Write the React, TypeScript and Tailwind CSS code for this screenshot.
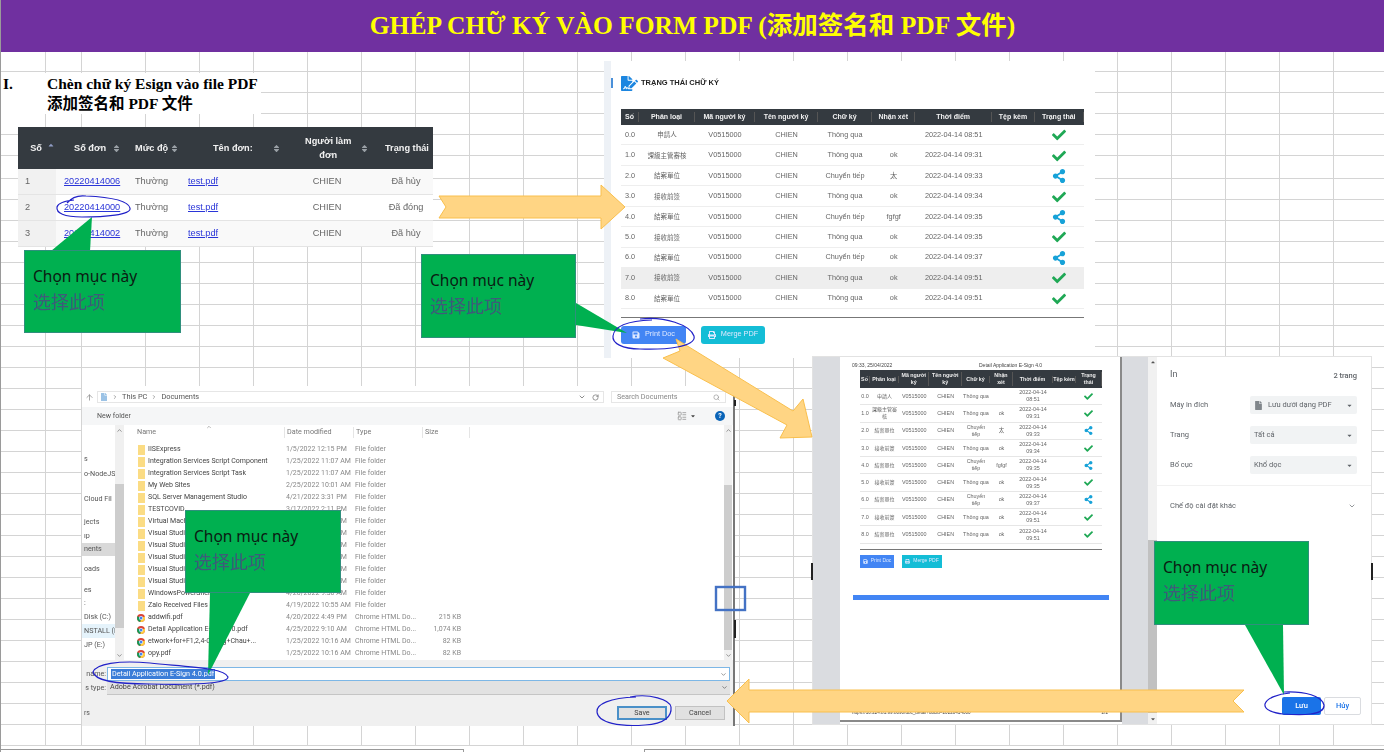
import React from 'react';
import { FaCheck, FaShareAlt, FaSave, FaPrint, FaFileSignature, FaFile, FaCaretDown, FaCaretUp, FaSort } from 'react-icons/fa';
import { ArrowUp, ChevronDown, ChevronRight, ChevronUp, RotateCw, Search, LayoutList } from 'lucide-react';

const sans = 'font-["Liberation_Sans","Noto_Sans_CJK_TC",sans-serif]';
const ui = 'font-["Noto_Sans","Noto_Sans_CJK_SC",sans-serif]';
const win = 'font-["Roboto","Noto_Sans",sans-serif]';

const signRows = [
  { no: '0.0', type: '申請人', sign: 'Thông qua', note: '', time: ['2022-04-14', '08:51'], share: false },
  { no: '1.0', type: '課級主管審核', sign: 'Thông qua', note: 'ok', time: ['2022-04-14', '09:31'], share: false },
  { no: '2.0', type: '結案單位', sign: 'Chuyển tiếp', note: '太', time: ['2022-04-14', '09:33'], share: true },
  { no: '3.0', type: '接收前簽', sign: 'Thông qua', note: 'ok', time: ['2022-04-14', '09:34'], share: false },
  { no: '4.0', type: '結案單位', sign: 'Chuyển tiếp', note: 'fgfgf', time: ['2022-04-14', '09:35'], share: true },
  { no: '5.0', type: '接收前簽', sign: 'Thông qua', note: 'ok', time: ['2022-04-14', '09:35'], share: false },
  { no: '6.0', type: '結案單位', sign: 'Chuyển tiếp', note: 'ok', time: ['2022-04-14', '09:37'], share: true },
  { no: '7.0', type: '接收前簽', sign: 'Thông qua', note: 'ok', time: ['2022-04-14', '09:51'], share: false },
  { no: '8.0', type: '結案單位', sign: 'Thông qua', note: 'ok', time: ['2022-04-14', '09:51'], share: false },
];

const signHead = ['Số', 'Phân loại', 'Mã người ký', 'Tên người ký', 'Chữ ký', 'Nhận xét', 'Thời điểm', 'Tệp kèm', 'Trạng thái'];

const files = [
  ['IISExpress', '1/5/2022 12:15 PM'],
  ['Integration Services Script Component', '1/25/2022 11:07 AM'],
  ['Integration Services Script Task', '1/25/2022 11:07 AM'],
  ['My Web Sites', '2/25/2022 10:01 AM'],
  ['SQL Server Management Studio', '4/21/2022 3:31 PM'],
  ['TESTCOVID', '3/17/2022 2:11 PM'],
  ['Virtual Machines', '1/25/2022 9:30 AM'],
  ['Visual Studio 2012', '1/25/2022 9:30 AM'],
  ['Visual Studio 2013', '1/25/2022 9:30 AM'],
  ['Visual Studio 2015', '1/25/2022 9:30 AM'],
  ['Visual Studio 2017', '1/25/2022 9:30 AM'],
  ['Visual Studio 2019', '1/25/2022 9:30 AM'],
  ['WindowsPowerShell', '4/20/2022 9:30 AM'],
  ['Zalo Received Files', '4/19/2022 10:55 AM'],
];

const pdfs = [
  ['addwifi.pdf', '4/20/2022 4:49 PM', '215 KB'],
  ['Detail Application E-Sign 4.0.pdf', '4/25/2022 9:10 AM', '1,074 KB'],
  ['etwork+for+F1,2,4-Quang+Chau+...', '1/25/2022 10:16 AM', '82 KB'],
  ['opy.pdf', '1/25/2022 10:16 AM', '82 KB'],
];

const sidebar = [
  { t: 's', h: 'h-[13px]' },
  { t: 'o-NodeJS', h: 'h-[17px]' },
  { t: 'Cloud Fil', h: 'h-[32px]' },
  { t: 'jects', h: 'h-[14px]' },
  { t: 'ıp', h: 'h-[14px]' },
  { t: 'nents', h: 'h-[13px]', cls: 'bg-[#d9d9d9]' },
  { t: 'oads', h: 'h-[27px]' },
  { t: 'es', h: 'h-[14px]' },
  { t: ':', h: 'h-[13px]' },
  { t: 'Disk (C:)', h: 'h-[14px]' },
  { t: 'NSTALL (D:', h: 'h-[14px]', cls: 'bg-[#e5f3fb]' },
  { t: 'JP (E:)', h: 'h-[14px]' },
];

const requests = [
  { no: 1, code: '20220414006', status: 'Đã hủy', cls: 'bg-[#f9f9f9]' },
  { no: 2, code: '20220414000', status: 'Đã đóng', cls: 'bg-white' },
  { no: 3, code: '20220414002', status: 'Đã hủy', cls: 'bg-[#f9f9f9]' },
];

const gridCells = Array.from({ length: 858 });

function SheetGrid() {
  return (
    <div className="grid flex-1 grid-cols-[45px_36px_63.6px_repeat(23,54px)] grid-rows-[20px_21px_21px_21px_21px_23px] auto-rows-[21px] overflow-hidden border-l border-[#9a9a9a]">
      {gridCells.map((_, i) => (
        <div key={i} className="border-r border-b border-[#d4d4d4]" />
      ))}
    </div>
  );
}

function ChromeIcon() {
  return (
    <svg width="8" height="8" viewBox="0 0 16 16" className="shrink-0">
      <circle cx="8" cy="8" r="8" fill="#db4437" />
      <path d="M8 8 L1 4.5 A8 8 0 0 0 7 16 Z" fill="#0f9d58" />
      <path d="M8 8 L15.5 5 A8 8 0 0 1 7 16 Z" fill="#ffcd40" />
      <circle cx="8" cy="8" r="4" fill="#fff" />
      <circle cx="8" cy="8" r="3" fill="#4285f4" />
    </svg>
  );
}

function RequestTable() {
  return (
    <div className={`absolute left-[18px] top-[127px] w-[415px] overflow-hidden blur-[0.3px] ${sans}`}>
      <div className="flex h-[42px] items-center bg-[#343a40] text-[9.2px] font-bold leading-[14px] text-[#f1f1f1]">
        <div className="flex w-[38px] justify-center gap-[5px] pl-[11px]">
          Số <FaCaretUp size={8} className="text-[#8f9cc4]" />
        </div>
        <div className="ml-[18px] flex w-[47px] items-center justify-between">Số đơn <FaSort size={9} className="text-[#9aa0a6]" /></div>
        <div className="ml-[14px] flex w-[44px] items-center justify-between">Mức độ <FaSort size={9} className="text-[#9aa0a6]" /></div>
        <div className="ml-[34px] flex w-[68px] items-center justify-between">Tên đơn: <FaSort size={9} className="text-[#9aa0a6]" /></div>
        <div className="ml-[24px] flex w-[64px] items-center justify-between text-center">
          <span>Người làm<br />đơn</span>
          <FaSort size={9} className="text-[#9aa0a6]" />
        </div>
        <div className="ml-[16px] whitespace-nowrap">Trạng thái</div>
      </div>
      {requests.map((r) => (
        <div key={r.no} className={`flex h-[26px] items-center border-b border-[#e4e4e4] text-[9.2px] text-[#666] ${r.cls}`}>
          <div className="flex h-full w-[38px] items-center bg-[#f1f1f1] pl-[7px]">{r.no}</div>
          <div className="w-[79px] pl-[8px] text-[#2a35d8] underline">{r.code}</div>
          <div className="w-[53px]">Thường</div>
          <div className="w-[100px] text-[#2a35d8] underline">test.pdf</div>
          <div className="w-[78px] text-center">CHIEN</div>
          <div className="flex-1 pl-[13px] text-center">{r.status}</div>
        </div>
      ))}
    </div>
  );
}

function StatusIcon({ share, size }: { share: boolean; size: number }) {
  return share ? <FaShareAlt size={size} className="text-[#17a2d8]" /> : <FaCheck size={size} className="text-[#1fa855]" />;
}

function SignaturePanel() {
  const cols = 'grid grid-cols-[18px_56px_60px_63px_54px_43.4px_76.6px_43px_48.7px]';
  return (
    <div className={`absolute left-[604px] top-[61px] flex h-[297px] w-[491px] flex-col bg-white pl-[7px] blur-[0.35px] ${sans} before:absolute before:left-0 before:top-0 before:h-full before:w-[7px] before:bg-[#edf1f6]`}>
      <div className="flex h-[48px] items-center pb-[4px]">
        <span className="h-[10px] w-[2px] bg-[#4a90d9]" />
        <FaFileSignature size={17} className="ml-[8px] text-[#1c86e0]" />
        <span className="ml-[3px] text-[7.5px] font-bold text-[#222]">TRẠNG THÁI CHỮ KÝ</span>
      </div>
      <div className="ml-[10px] w-[463px]">
        <div className={`${cols} h-[16px] items-center bg-[#343a40] text-center text-[7px] font-bold text-[#f1f1f1]`}>
          {signHead.map((h) => (
            <div key={h} className="border-r border-[#555]">{h}</div>
          ))}
        </div>
        {signRows.map((r) => (
          <div key={r.no} className={`${cols} h-[20.44px] items-center border-b border-[#eeeeee] pt-px text-center text-[7.3px] text-[#666] ${r.no === '7.0' ? 'bg-[#eeeeee]' : ''}`}>
            <div>{r.no}</div>
            <div className="text-[6.5px]">{r.type}</div>
            <div>V0515000</div>
            <div>CHIEN</div>
            <div>{r.sign}</div>
            <div>{r.note}</div>
            <div>{r.time.join(' ')}</div>
            <div />
            <div className="flex justify-center"><StatusIcon share={r.share} size={14} /></div>
          </div>
        ))}
        <div className="mt-[8px] h-px bg-[#777]" />
        <div className="mt-[8px] flex gap-[15px] text-[7.3px] text-[#dfe9ff]">
          <div className="flex h-[18px] w-[65px] items-center justify-center gap-[5px] rounded-[3px] bg-[#4285f4]">
            <FaSave size={8} /> Print Doc
          </div>
          <div className="flex h-[18px] w-[64px] items-center justify-center gap-[5px] rounded-[3px] bg-[#14bdd6]">
            <FaPrint size={8} /> Merge PDF
          </div>
        </div>
      </div>
    </div>
  );
}

function SaveDialog() {
  return (
    <div className={`absolute left-[82px] top-[386px] flex h-[340px] w-[653px] flex-col border-r-2 border-[#777] bg-white text-[7px] text-[#555] blur-[0.3px] ${win}`}>
      <div className="flex h-[21px] items-center gap-[3px] px-[3px] pt-[1px]">
        <ArrowUp size={9} className="text-[#8a8a8a]" />
        <div className="flex h-[12px] flex-1 items-center gap-[4px] border border-[#e6e6e6] pl-[2px] text-[7.4px]">
          <FaFile size={8} className="text-[#9cc3e6]" />
          <ChevronRight size={6} />
          <span>This PC</span>
          <ChevronRight size={6} />
          <span>Documents</span>
          <span className="ml-auto flex items-center gap-[6px] pr-[4px]">
            <ChevronDown size={8} />
            <RotateCw size={7} />
          </span>
        </div>
        <div className="ml-[4px] flex h-[12px] w-[115px] items-center justify-between border border-[#e6e6e6] px-[5px] text-[7.2px] text-[#888]">
          Search Documents <Search size={7} />
        </div>
        <div className="w-[1px]" />
      </div>
      <div className="flex h-[18px] items-center bg-[#f5f6f7] pl-[15px] pr-[8px]">
        <span>New folder</span>
        <span className="ml-auto flex items-center gap-[3px]">
          <LayoutList size={10} className="text-[#999]" />
          <FaCaretDown size={6} className="mr-[16px] text-[#444]" />
          <span className="flex h-[10px] w-[10px] items-center justify-center rounded-full bg-[#0a64b8] text-[7px] font-bold text-white">?</span>
        </span>
      </div>
      <div className="flex h-[235px]">
        <div className="w-[33px] overflow-hidden whitespace-nowrap pt-[28px]">
          {sidebar.map((s) => (
            <div key={s.t} className={`flex w-full items-center pl-[2px] text-[7.2px] ${s.h} ${s.cls ?? ''}`}>{s.t}</div>
          ))}
        </div>
        <div className="flex w-[9px] flex-col items-center bg-[#f0f0f0]">
          <ChevronUp size={7} className="mt-[2px]" />
          <div className="mt-[50px] h-[144px] w-full bg-[#cdcdcd]" />
          <ChevronDown size={7} className="mt-auto mb-[1px]" />
        </div>
        <div className="flex flex-1 flex-col pl-[12px]">
          <div className="flex h-[15px] items-center text-[7.2px] text-[#777]">
            <div className="relative w-[149px] border-r border-[#e5e5e5] pl-[1px]">
              Name
              <ChevronUp size={6} className="absolute left-[70px] top-[-3px]" />
            </div>
            <div className="w-[69px] border-r border-[#e5e5e5] pl-[2px]">Date modified</div>
            <div className="w-[69px] border-r border-[#e5e5e5] pl-[2px]">Type</div>
            <div className="w-[47px] border-r border-[#e5e5e5] pl-[2px]">Size</div>
          </div>
          <div className="h-[4px]" />
          {files.map(([name, date]) => (
            <div key={name} className="flex h-[12.03px] items-center leading-none">
              <div className="flex w-[149px] items-center gap-[3px] pl-[2px] whitespace-nowrap text-[#444]">
                <span className="h-[10px] w-[7px] shrink-0 bg-[#fbdc84]" />
                {name}
              </div>
              <div className="w-[69px] whitespace-nowrap pl-[1px] text-[#888]">{date}</div>
              <div className="w-[69px] pl-[1px] text-[#888]">File folder</div>
            </div>
          ))}
          {pdfs.map(([name, date, size]) => (
            <div key={name} className="flex h-[12.03px] items-center leading-none">
              <div className="flex w-[149px] items-center gap-[3px] pl-[1px] whitespace-nowrap text-[#444]">
                <ChromeIcon />
                {name}
              </div>
              <div className="w-[69px] whitespace-nowrap pl-[1px] text-[#888]">{date}</div>
              <div className="w-[69px] whitespace-nowrap pl-[1px] text-[#888]">Chrome HTML Do...</div>
              <div className="w-[38px] whitespace-nowrap text-right text-[#888]">{size}</div>
            </div>
          ))}
        </div>
        <div className="mr-[1px] flex w-[8px] flex-col items-center bg-[#f0f0f0]">
          <ChevronUp size={7} className="mt-[2px]" />
          <div className="mt-[51px] h-[165px] w-full bg-[#cdcdcd]" />
          <ChevronDown size={7} className="mt-auto mb-[1px]" />
        </div>
      </div>
      <div className="flex flex-1 flex-col bg-[#f0f0f0] pl-[1px] pr-[3px] pt-[7px]">
        <div className="flex h-[14px] items-center">
          <span className="w-[23px] text-right text-[7.2px]">name:</span>
          <div className="ml-[1px] flex h-[14px] flex-1 items-center justify-between border border-[#7db7e6] bg-white pl-[3px] pr-[2px]">
            <span className="bg-[#3b7dd8] px-px text-[7.2px] text-white">Detail Application E-Sign 4.0.pdf</span>
            <ChevronDown size={7} />
          </div>
        </div>
        <div className="flex h-[14px] items-center">
          <span className="w-[23px] text-right text-[7.2px]">s type:</span>
          <div className="ml-[1px] flex h-[14px] flex-1 items-center justify-between border-b border-[#c5c5c5] bg-[#e2e2e2] pl-[3px] pr-[2px] text-[7.2px] text-[#444]">
            <span>Adobe Acrobat Document (*.pdf)</span>
            <ChevronDown size={7} />
          </div>
        </div>
        <div className="mt-[11px] flex h-[14px] items-center">
          <span className="pl-[1px]">rs</span>
          <div className="ml-auto flex gap-[8px] pr-[5px] text-[7.2px] text-[#444]">
            <div className="flex h-[14px] w-[50px] items-center justify-center border-2 border-[#4a90c8] bg-[#e1e1e1]">Save</div>
            <div className="flex h-[14px] w-[50px] items-center justify-center border border-[#c2c2c2] bg-[#e1e1e1]">Cancel</div>
          </div>
        </div>
      </div>
    </div>
  );
}

function SelectBox({ children }: { children: React.ReactNode }) {
  return (
    <div className="flex h-[18px] w-[107px] items-center justify-between rounded-[2px] bg-[#f1f3f4] pl-[4px] pr-[4px] text-[#5f6368]">
      <span className="flex items-center gap-[5px]">{children}</span>
      <FaCaretDown size={7} />
    </div>
  );
}

function PrintPreview() {
  const cols = 'grid grid-cols-[10px_29px_30.4px_32.6px_28px_23px_40px_23px_26px]';
  return (
    <div className={`absolute left-[812px] top-[356px] flex h-[369px] w-[560px] border border-[#e2e2e2] bg-white blur-[0.35px] ${sans}`}>
      <div className="w-[27px] bg-[#dadce0]" />
      <div className="flex h-[365px] w-[282px] flex-col border-r-2 border-b-2 border-[#8a8a8a] bg-white pl-[12px] text-[5px] text-[#444]">
        <div className="flex h-[13px] items-end pb-px">
          <span className="w-[127px]">09:33, 25/04/2022</span>
          <span>Detail Application E-Sign 4.0</span>
        </div>
        <div className="ml-[8px] w-[242px]">
          <div className={`${cols} h-[18px] items-center bg-[#343a40] text-center text-[5.3px] font-bold leading-[7px] text-[#eee]`}>
            {signHead.map((h) => (
              <div key={h} className="border-r border-[#555]">{h}</div>
            ))}
          </div>
          {signRows.map((r) => (
            <div key={r.no} className={`${cols} h-[17.3px] items-center border-b border-[#e6e6e6] text-center text-[5.4px] leading-[7px] text-[#666]`}>
              <div>{r.no}</div>
              <div className="text-[5px]">{r.type}</div>
              <div>V0515000</div>
              <div>CHIEN</div>
              <div className="whitespace-nowrap">
                {r.share ? <>Chuyển<br />tiếp</> : r.sign}
              </div>
              <div>{r.note}</div>
              <div>{r.time[0]}<br />{r.time[1]}</div>
              <div />
              <div className="flex justify-center"><StatusIcon share={r.share} size={9} /></div>
            </div>
          ))}
          <div className="mt-[5px] h-px bg-[#777]" />
          <div className="mt-[5px] flex gap-[8px] text-[5px] text-[#dbe8ff]">
            <div className="flex h-[13px] w-[34px] items-center justify-center gap-[3px] bg-[#4285f4]"><FaSave size={5} /> Print Doc</div>
            <div className="flex h-[13px] w-[40px] items-center justify-center gap-[3px] bg-[#14bdd6]"><FaPrint size={5} /> Merge PDF</div>
          </div>
        </div>
        <div className="mt-[27px] ml-px h-[5px] w-[256px] bg-[#4285f4]" />
        <div className="mt-auto mb-[3px] flex justify-between pr-[12px] text-[4.6px]">
          <span>https://10.224.81.99:8090/doc_detail?docid=20220414000</span>
          <span>2/2</span>
        </div>
      </div>
      <div className="w-[26px] bg-[#dadce0]" />
      <div className="flex w-[9px] flex-col bg-[#f1f1f1] text-[#555]">
        <FaCaretUp size={6} className="mx-auto mt-[2px]" />
        <div className="mt-auto h-[173px] w-full bg-[#c1c1c1]" />
        <FaCaretDown size={6} className="mx-auto mt-[3px] mb-[2px]" />
      </div>
      <div className={`flex flex-1 flex-col text-[7.5px] text-[#5f6368] ${win}`}>
        <div className="flex h-[26px] items-end justify-between pl-[13px] pr-[14px] pb-[2px]">
          <span className="text-[9px]">In</span>
          <span className="font-medium">2 trang</span>
        </div>
        <div className="mt-[13px] flex flex-col gap-[12px] pl-[13px] pr-[14px]">
          <div className="flex items-center justify-between">
            <span>Máy in đích</span>
            <SelectBox><FaFile size={9} className="text-[#80868b]" /> Lưu dưới dạng PDF</SelectBox>
          </div>
          <div className="flex items-center justify-between">
            <span>Trang</span>
            <SelectBox>Tất cả</SelectBox>
          </div>
          <div className="flex items-center justify-between">
            <span>Bố cục</span>
            <SelectBox>Khổ dọc</SelectBox>
          </div>
        </div>
        <div className="mt-[11px] flex h-[40px] items-center justify-between border-t border-[#f1f1f1] pl-[13px] pr-[15px]">
          <span>Chế độ cài đặt khác</span>
          <ChevronDown size={8} />
        </div>
        <div className="mt-auto mb-[9px] flex justify-end gap-[3px] pr-[10px] text-[7.5px] font-medium">
          <div className="flex h-[18px] w-[39px] items-center justify-center rounded-[2px] bg-[#1a73e8] text-white">Lưu</div>
          <div className="flex h-[18px] w-[37px] items-center justify-center rounded-[2px] border border-[#dadce0] text-[#1a73e8]">Hủy</div>
        </div>
      </div>
    </div>
  );
}

function Callout({ cls }: { cls: string }) {
  return (
    <div className={`absolute flex flex-col border border-[#2f8f7c] bg-[#00b050] pl-[8px] pt-[12px] ${ui} ${cls}`}>
      <span className="text-[15.5px] leading-[26px] text-[#0b1a12]">Chọn mục này</span>
      <span className="text-[18px] leading-[26px] text-[#3f5b7a]">选择此项</span>
    </div>
  );
}

function Annotations() {
  return (
    <svg className="absolute inset-0" width="1384" height="752" viewBox="0 0 1384 752" fill="none">
      {/* arrows */}
      <g fill="#ffd584" stroke="#f9bf4c" strokeWidth="1">
        <path d="M439 196 L601 196 L601 185 L625 207 L601 229 L601 218 L439 218 L446 207 Z" />
        <path d="M676 339 L793 411 L803 399 L812 437 L780 438 L787 425 L663 358 L680 351 Z" />
        <path d="M1244 690 L749 690 L749 679 L727 701 L749 723 L749 712 L1244 712 L1233 701 Z" />
      </g>
      {/* callout tails */}
      <g fill="#00b050">
        <path d="M51 251 L92 217 L90 251 Z" />
        <path d="M576 303 L627 333 L576 325 Z" />
        <path d="M210 593 L208 675 L250 593 Z" />
        <path d="M1245 625 L1284 695 L1283 625 Z" />
      </g>
      {/* pen circles */}
      <g stroke="#2222c8" strokeWidth="1.2">
        <path d="M67 203 C72 197 78 195 86 196 C108 197 128 200 130 208 C132 215 104 217 82 217 C64 217 56 213 57 207 C58 203 64 201 74 200" />
        <path d="M640 319 C665 316 690 325 694 336 C697 347 665 350 640 349 C622 349 612 343 613 336 C614 327 625 321 652 320" />
        <path d="M93 672 C96 664 118 660 150 663 C190 667 225 668 228 677 C228 684 190 685 150 684 C115 684 95 681 93 672 Z" />
        <path d="M630 697 C650 693 670 700 671 707 C672 716 665 724 645 725 C620 727 598 723 597 712 C596 704 610 698 636 697" />
        <path d="M1284 692 C1305 691 1322 696 1324 705 C1325 716 1300 715 1283 714 C1272 713 1264 709 1265 704 C1267 698 1278 694 1290 693" />
      </g>
      {/* blue square */}
      <rect x="716" y="587" width="29" height="23" stroke="#4472c4" strokeWidth="2.4" />
      {/* dark bits left of the pasted windows */}
      <g fill="#222">
        <rect x="734" y="400" width="2" height="6" />
        <rect x="734" y="620" width="2" height="18" />
        <rect x="811" y="563" width="2" height="17" />
        <rect x="1371" y="563" width="2" height="17" />
      </g>
    </svg>
  );
}

export default function App() {
  return (
    <div className="relative flex h-[752px] w-[1384px] flex-col overflow-hidden bg-white">
      <div className='flex h-[52px] shrink-0 items-center justify-center border-l border-[#9a9a9a] bg-[#7030a0] font-["Liberation_Serif","Noto_Sans_CJK_SC",serif] text-[25.5px] font-bold text-[#ffff00]'>
        GHÉP CHỮ KÝ VÀO FORM PDF (添加签名和 PDF 文件)
      </div>
      <SheetGrid />

      <div className='absolute left-px top-[73px] flex h-[41px] w-[260px] bg-white pt-px font-["Liberation_Serif","Noto_Sans_CJK_SC",serif] text-[15.5px] font-bold leading-[20px] text-black'>
        <div className="w-[46px] shrink-0 pl-[2px]">I.</div>
        <div className="whitespace-nowrap">
          Chèn chữ ký Esign vào file PDF
          <br />
          添加签名和 PDF 文件
        </div>
      </div>

      <RequestTable />
      <SignaturePanel />
      <SaveDialog />
      <PrintPreview />
      <Annotations />
      <Callout cls="left-[24px] top-[250px] h-[83px] w-[157px]" />
      <Callout cls="left-[421px] top-[254px] h-[84px] w-[155px]" />
      <Callout cls="left-[185px] top-[510px] h-[83px] w-[156px]" />
      <Callout cls="left-[1154px] top-[541px] h-[84px] w-[155px]" />

      <div className="absolute left-0 top-[749px] h-[3px] w-[464px] border-t border-r border-[#999]" />
      <div className="absolute left-[644px] top-[749px] h-[3px] w-[740px] border-t border-l border-[#999]" />
    </div>
  );
}
